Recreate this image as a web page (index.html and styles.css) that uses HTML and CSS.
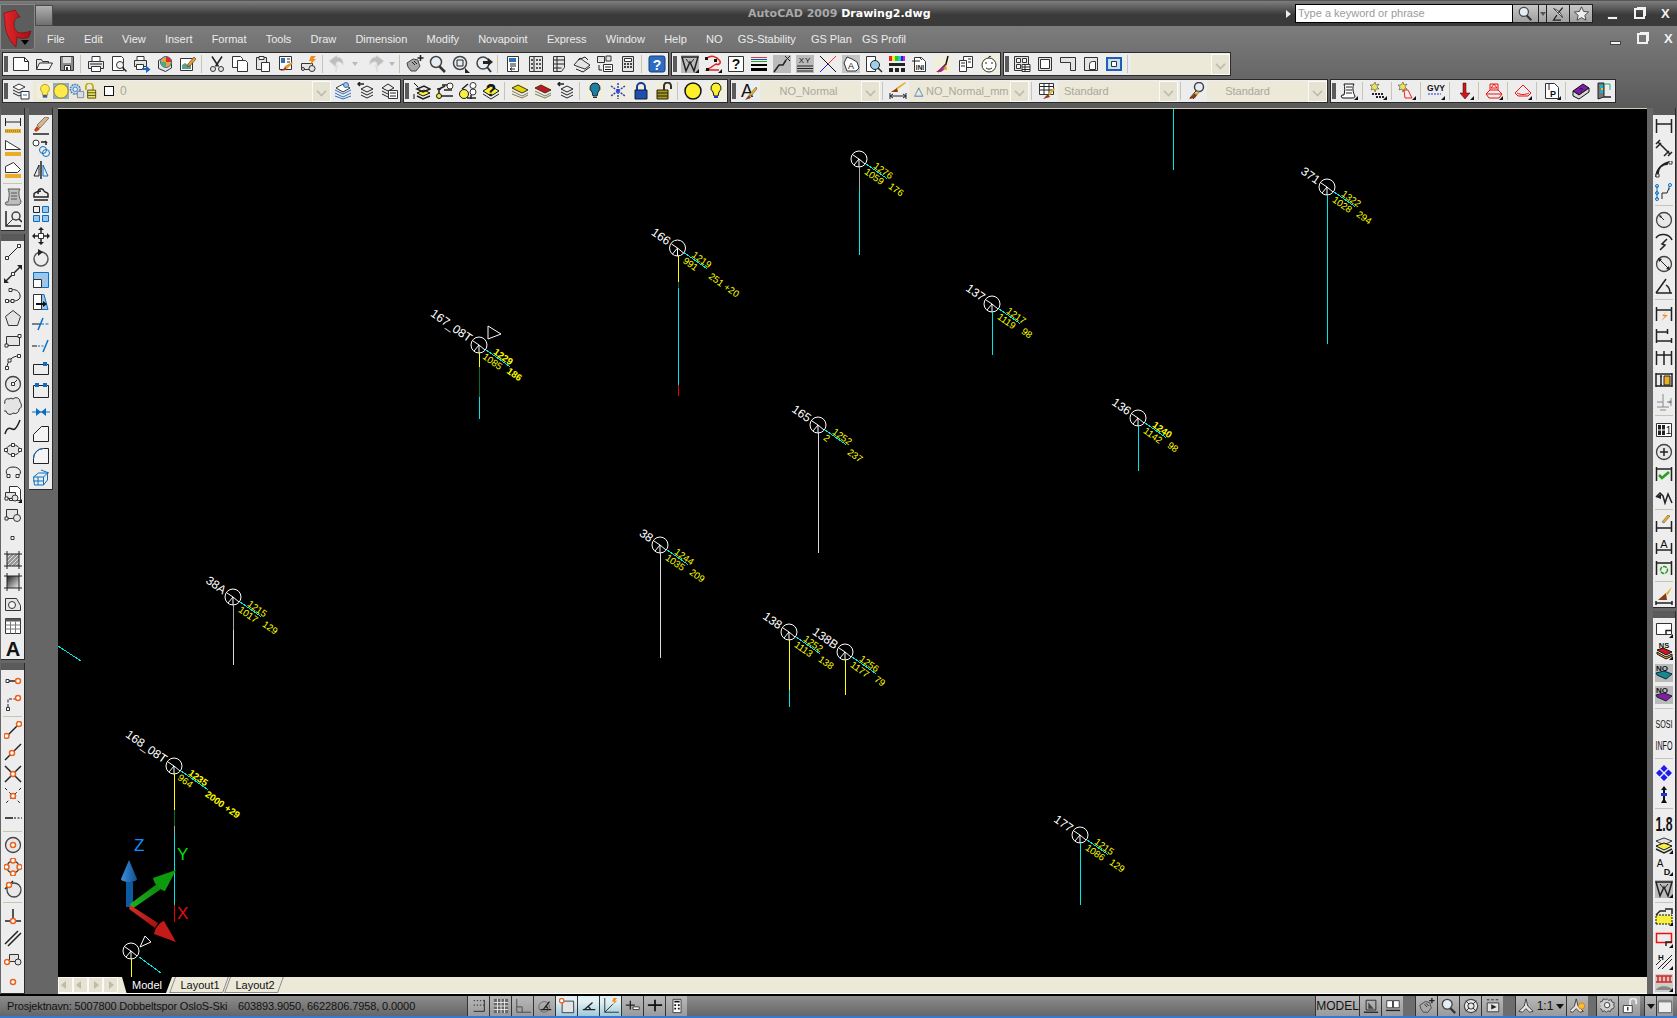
FILE: index.html
```html
<!DOCTYPE html>
<html lang="en">
<head>
<meta charset="utf-8">
<title>AutoCAD 2009 Drawing2.dwg</title>
<link rel="stylesheet" href="styles.css">
</head>
<body>
<svg class="sprite" aria-hidden="true">
<defs>
<!-- standard toolbar -->
<symbol id="new" viewBox="0 0 18 18"><path class="w" d="M1.5 2.5h11l4 4v9h-15z"/><path class="k" d="M12.5 2.5v4h4"/></symbol>
<symbol id="open" viewBox="0 0 18 18"><path class="g" d="M1.5 14.5v-10h5l1 2h6v2"/><path class="e" d="M1.5 14.5l3-6.500h13l-3.500 6.500z"/></symbol>
<symbol id="save" viewBox="0 0 18 18"><path fill="#8d8d8d" stroke="#333" d="M2.500 1.500h13v14h-13z"/><path fill="#ddd" d="M5 2h8v6H5z"/><path class="w" d="M6.500 10.500h6v5h-6z"/><path d="M8 12h2v3H8z" fill="#333"/></symbol>
<symbol id="plot" viewBox="0 0 18 18"><path class="w" d="M5 1.500h8v5H5z"/><path class="g" d="M1.500 6.500h15v7h-15z"/><path class="w" d="M4.500 11.500h9v5h-9z"/><path class="k" d="M3 9h12"/></symbol>
<symbol id="preview" viewBox="0 0 18 18"><path class="w" d="M2.500 1.500h9l2 2v12h-11z"/><circle class="e" cx="10" cy="10" r="3.500"/><path class="kk" d="M12.500 12.500l4 4"/></symbol>
<symbol id="publish" viewBox="0 0 18 18"><path class="w" d="M4 1.500h7v4H4z"/><path class="g" d="M1.500 5.500h12v6h-12z"/><path class="w" d="M3.500 9.500h7v5h-7z"/><path d="M9 13h4v-2.500l4.500 4-4.500 3.500V15H9z" fill="#1565c0"/></symbol>
<symbol id="d3" viewBox="0 0 18 18"><path class="g" d="M2.500 5.500l6-3.500 7 3v8l-6 3.500-7-3z"/><circle cx="10" cy="7" r="5.500" fill="#e9a23b" stroke="#2b73c4"/><path d="M10 1.500a5.500 5.500 0 0 1 5.500 5.500H10z" fill="#d43030"/><path d="M10 7h-5a5 5 0 0 0 5 5z" fill="#4db06a"/></symbol>
<symbol id="sheet" viewBox="0 0 18 18"><path class="w" d="M1.500 3.500h12v12h-12z"/><path fill="#5f9e8a" d="M3 10l3-2 3 2 3-1v5H3z"/><path d="M9 9l6-7 2 2-6 7-2.500.500z" fill="#ed9a2c" stroke="#333" stroke-width=".6"/></symbol>
<symbol id="cut" viewBox="0 0 18 18"><path class="kk" d="M4 1.500l6.500 10M14 1.500l-6.500 10"/><circle class="g" cx="5" cy="14" r="2.500"/><circle class="g" cx="13" cy="14" r="2.500"/></symbol>
<symbol id="copy" viewBox="0 0 18 18"><path class="w" d="M1.500 1.500h8l2 2v9h-10z"/><path class="w" d="M6.500 5.500h8l2 2v9h-10z"/></symbol>
<symbol id="paste" viewBox="0 0 18 18"><path class="g" d="M2.500 2.500h10v12h-10z"/><path class="e" d="M5 1.500h5v3H5z"/><path class="w" d="M7.500 7.500h8v9h-8z"/></symbol>
<symbol id="match" viewBox="0 0 18 18"><path class="w" d="M2.500 1.500h12v13h-12z"/><path fill="#2f6fb5" d="M4 3h4v5H4z"/><path class="k" d="M10 4h3M10 7h3"/><path d="M16 8l-6 6-3-1 1-2 7-4z" fill="#e89a2e"/><path d="M9 12l-6 4 6-1z" fill="#a3391c"/></symbol>
<symbol id="blockb" viewBox="0 0 18 18"><path class="g" d="M1.500 8.500h11v6h-11z"/><circle class="g" cx="12" cy="13.500" r="3"/><circle class="g" cx="3" cy="14" r="1.500"/><path d="M11 1h5l-3 3h3l-6 6 1.500-4H9z" fill="#ef8a17"/></symbol>
<symbol id="undo" viewBox="0 0 18 18"><path d="M7 17V9c0-3 5-3 7 1 1-5-2-8-6-8V0L0 6l8 7v-3c1-1-1 4-1 7z" fill="#bdbdbd" stroke="#ddd"/></symbol>
<symbol id="redo" viewBox="0 0 18 18"><path d="M11 17V9c0-3-5-3-7 1-1-5 2-8 6-8V0l8 6-8 7v-3c-1-1 1 4 1 7z" fill="#bdbdbd" stroke="#ddd"/></symbol>
<symbol id="pan" viewBox="0 0 18 18"><path d="M1 8l6-4 5 1 1 4 1 2-4 5H5L2 12z" fill="#a8a8a8" stroke="#444"/><path class="k" d="M6 7l3 3M8 6l3 3"/><path class="kk" d="M14.500 0v6M11.500 3h6"/></symbol>
<symbol id="zoom" viewBox="0 0 18 18"><circle class="gl" cx="7" cy="7" r="5.500"/><path d="M10.500 11.500l5.500 5.500" stroke="#333" stroke-width="2.500" fill="none"/></symbol>
<symbol id="zoomw" viewBox="0 0 18 18"><circle class="gl" cx="8" cy="8" r="6.500"/><path class="k" d="M5 5h6v6H5z"/><path d="M13 13l5 5h-5z" fill="#222"/></symbol>
<symbol id="zoomp" viewBox="0 0 18 18"><circle class="gl" cx="8" cy="8" r="6"/><path d="M12 12l4 5" stroke="#333" stroke-width="2" fill="none"/><path d="M18 7l-5-4v3H8v3h5v2z" fill="#222"/></symbol>
<symbol id="props" viewBox="0 0 18 18"><path class="w" d="M3.500 1.500h11v15h-11z"/><path fill="#2f6fb5" d="M5 3h7v4H5z"/><path class="k" d="M6 9h6M6 11h6"/><path d="M6 14h5M8 12.500L6 14l2 1.500" class="k"/></symbol>
<symbol id="dc" viewBox="0 0 18 18"><path class="g" d="M2.500 1.500h13v15h-13z"/><path class="k" d="M7 1.500v15"/><path fill="#555" d="M4 4h2v2H4zM4 8h2v2H4zM4 12h2v2H4zM9 4h2v2H9zM12 4h2v2h-2zM9 8h2v2H9zM12 8h2v2h-2zM9 12h2v2H9zM12 12h2v2h-2z"/></symbol>
<symbol id="tp" viewBox="0 0 18 18"><path class="g" d="M3.500 1.500h11v11l-3 4h-8z"/><path class="k" d="M7 1.500v15M3.500 5h11M3.500 9h11M3.500 13h8"/></symbol>
<symbol id="ssm" viewBox="0 0 18 18"><path class="g" d="M1 10l6-7 4 3 6 4-5 4-6-2z"/><path class="k" d="M3 14l7 3 7-5M5 5l7-3 3 3"/></symbol>
<symbol id="mk" viewBox="0 0 18 18"><path class="g" d="M1.500 1.500h7v6h-7zM10 1h5v5h-5z"/><path class="w" d="M7.500 9.500h9v7h-9z"/><path class="k" d="M9 12h6M9 14.500h6M3 10v5h3"/></symbol>
<symbol id="calc" viewBox="0 0 18 18"><path class="g" d="M3.500 1.500h11v15h-11z"/><path class="w" d="M5.500 3.500h7v3h-7z"/><path fill="#444" d="M5 8h2v2H5zM8 8h2v2H8zM11 8h2v2h-2zM5 11h2v2H5zM8 11h2v2H8zM11 11h2v2h-2z"/></symbol>
<symbol id="help" viewBox="0 0 18 18"><rect x="1" y="1" width="16" height="16" rx="2" fill="#2d6cc0" stroke="#173f7e"/><text x="9" y="14.500" class="it wt" font-size="14" text-anchor="middle">?</text></symbol>
<!-- custom toolbar -->
<symbol id="w1" viewBox="0 0 18 18"><path fill="#bbb" d="M0 0h18v18H0z"/><path class="kk" d="M1 2h16L13 16l-4-9-4 9z"/><path class="k" d="M5 4l4 5 4-5"/><path d="M14 18l4-4v4z" fill="#111"/></symbol>
<symbol id="cv" viewBox="0 0 18 18"><path d="M3 3c4-3 9-2 13 3 1 3-2 4-4 3l-9 6h12" fill="none" stroke="#d22" stroke-width="1.500"/><path fill="#111" d="M1 2h3v3H1zM10 4h3v3h-3zM2 13h3v3H2z"/><path d="M14 18l4-4v4z" fill="#111"/></symbol>
<symbol id="qm" viewBox="0 0 18 18"><path class="w" d="M1.500 1.500h15v15h-15z"/><text x="9" y="14" class="it" font-size="14" text-anchor="middle" font-weight="700">?</text></symbol>
<symbol id="bars" viewBox="0 0 18 18"><path stroke="#e33" d="M1 2.500h16"/><path stroke="#1b3fe0" d="M1 4.500h16"/><path stroke="#2a2" d="M1 6.500h16"/><path fill="#000" d="M1 9h16v2H1zM1 13h16v3H1z"/></symbol>
<symbol id="lnk" viewBox="0 0 18 18"><path fill="#bbb" d="M0 0h18v18H0z"/><path class="kk" d="M1 17l5-7h4l3-5"/><path class="k" d="M12 1l5 5M17 1l-5 5"/></symbol>
<symbol id="xy" viewBox="0 0 18 18"><path fill="#bbb" d="M0 0h18v18H0z"/><text x="9" y="8" class="it" font-size="8" text-anchor="middle" letter-spacing="1">XY</text><path class="k" d="M1 11h16M1 13.500h16M1 16h16"/></symbol>
<symbol id="xx" viewBox="0 0 18 18"><path stroke="#111" d="M1 1l16 16"/><path stroke="#e33" d="M17 1L9 9"/><path stroke="#22d" d="M9 9l-8 8"/></symbol>
<symbol id="map" viewBox="0 0 18 18"><path fill="#c5c5c5" d="M0 0h18v18H0z"/><path class="w" d="M2 8l3-6 5 2 5 3 2 6-3 3H5z"/><text x="9" y="14" class="it" font-size="9" fill="#1f3fd0" text-anchor="middle">A</text></symbol>
<symbol id="look" viewBox="0 0 18 18"><path class="w" d="M1.500 1.500h9v15h-9z"/><circle class="gb" cx="10" cy="10" r="4.500"/><path class="kk" d="M13 13l4 4"/></symbol>
<symbol id="rgb" viewBox="0 0 18 18"><path fill="#e22" d="M1 1h3v5H1z"/><path fill="#ee2" d="M4 1h3v5H4z"/><path fill="#2c2" d="M7 1h3v5H7z"/><path fill="#2cc" d="M10 1h3v5h-3z"/><path fill="#22d" d="M13 1h2v5h-2z"/><path fill="#c2c" d="M15 1h2v5h-2z"/><path fill="#222" d="M1 8h16v3H1zM1 13h4v4H1zM7 13h4v4H7zM13 13h4v4h-4z"/></symbol>
<symbol id="ini" viewBox="0 0 18 18"><path class="w" d="M3.500 2.500h7l4 4v10h-11z"/><path class="k" d="M1 6h8M8 2l3 3"/><text x="9" y="15" class="it" font-size="6.500" fill="#1a2fb0" text-anchor="middle" font-weight="700">INI</text></symbol>
<symbol id="brush" viewBox="0 0 18 18"><path fill="#f1eedc" d="M0 0h18v18H0z"/><path d="M14 1l-2 8-8 8" stroke="#111" stroke-width="1.500" fill="none"/><path d="M2 17l8-6 3-3-2 6-4 3z" fill="#a02b8a"/><path d="M9 14l3-4 1 5z" fill="#d8a11c"/></symbol>
<symbol id="pin" viewBox="0 0 18 18"><path class="w" d="M6.500 1.500h9v11h-9z"/><path class="w" d="M2.500 5.500h7v11h-7z"/><path class="k" d="M4 8h4M4 11h4M11 4h3M11 7h3"/></symbol>
<symbol id="face" viewBox="0 0 18 18"><path fill="#f1eedc" d="M0 0h18v18H0z"/><circle class="w" cx="9" cy="10" r="7"/><path class="k" d="M5 8h2M11 8h2M6 13c2 1.500 4 1.500 6 0"/><path class="k" d="M9 3c-1-2 2-2 2-1"/></symbol>
<!-- viewport toolbar -->
<symbol id="vp1" viewBox="0 0 18 18"><path class="g" d="M1.500 1.500h14v14h-14z"/><path class="e" d="M3.500 3.500h4v4h-4zM9.500 3.500h4v4h-4zM3.500 9.500h4v4h-4z"/><path class="w" d="M9 9.500h8v7H9z"/><path class="k" d="M9 12h8M9 14.500h8M12 9.500v7"/></symbol>
<symbol id="vp2" viewBox="0 0 18 18"><path class="g" d="M2.500 2.500h13v13h-13z"/><path class="w" d="M4.500 4.500h9v9h-9z"/></symbol>
<symbol id="vp3" viewBox="0 0 18 18"><path class="g" d="M1.500 2.500h15v13h-5v-8h-10z"/></symbol>
<symbol id="vp4" viewBox="0 0 18 18"><path class="g" d="M2.500 2.500h13v13h-13z"/><path class="w" d="M7.500 14.500v-5a3 3 0 0 1 3-3h3v8z"/></symbol>
<symbol id="vp5" viewBox="0 0 18 18"><path fill="#c5dff5" stroke="#1e5fb0" stroke-width="2" d="M2 3h14v12H2z"/><path class="w" d="M6.500 6.500h5v5h-5z"/></symbol>
<!-- layers row -->
<symbol id="layer" viewBox="0 0 18 18"><path class="w" d="M1 5l6-3 6 3-6 3z"/><path class="k" d="M1 8l6 3 4-2M1 11l6 3 2-1"/><path class="w" d="M9 9.500h8v7.500H9z"/><path stroke="#2f6fb5" d="M11 13h4"/></symbol>
<symbol id="bulb" viewBox="0 0 18 18"><path fill="#f1eedc" d="M0 0h18v18H0z"/><path d="M9 1.500a5 5 0 0 1 3 9v3H6v-3a5 5 0 0 1 3-9z" fill="#ffe94d" stroke="#aa9a22"/><path fill="#3c5ba8" d="M6.500 13.500h5v3h-5z"/></symbol>
<symbol id="sun" viewBox="0 0 18 18"><rect width="18" height="18" fill="#2f6fb5" opacity=".5"/><circle cx="9" cy="9" r="8" fill="#ffe94d" stroke="#8d8420"/></symbol>
<symbol id="gear" viewBox="0 0 18 18"><circle cx="7" cy="7" r="5.500" fill="#bdd0e6" stroke="#3f78b8" stroke-width="1.500" stroke-dasharray="2 1"/><circle cx="7" cy="7" r="2.500" fill="#e9eef5" stroke="#3f78b8"/><path fill="#d9dce3" stroke="#7b8a9a" d="M9.500 9.500h7v7h-7z"/></symbol>
<symbol id="unlock" viewBox="0 0 18 18"><path d="M1 8V4a4 4 0 0 1 8 0v4" stroke="#bcae1e" stroke-width="2" fill="none"/><path d="M3 8h9v9H3z" fill="#ece454" stroke="#4a441d"/><path stroke="#4a441d" d="M3 11h9M3 14h9"/></symbol>
<symbol id="lfreeze" viewBox="0 0 18 18"><path class="w" d="M2 6l7-4 7 4-7 4z"/><path stroke="#2f6fb5" fill="none" d="M1 8l8 4 8-4M1 11l8 4 8-4M1 14l8 3 8-3"/><circle cx="12" cy="3" r="2.500" fill="#9fc5ee" stroke="#2f6fb5"/></symbol>
<symbol id="lprev" viewBox="0 0 18 18"><path class="k" d="M4 7l6-3 6 3-6 3zM4 10l6 3 6-3M4 13l6 3 6-3"/><path class="kk" d="M7 2H1m2-2L1 2l2 2"/></symbol>
<symbol id="lstate" viewBox="0 0 18 18"><path class="k" d="M2 6l6-4 6 4-6 3zM2 9l6 3 4-2M2 12l6 3"/><path class="w" d="M8.500 8.500h9v8h-9z"/><path class="k" d="M10 11h6M10 14h6"/></symbol>
<symbol id="lmake" viewBox="0 0 18 18"><path d="M4 11l7-3 6 3-7 3z" fill="#f7ef3f" stroke="#111"/><path class="kk" d="M4 7l7-3 6 3-7 3zM4 14l6 3 7-3"/><path d="M1 1l4 4M1 17V12" stroke="#111" fill="none"/></symbol>
<symbol id="lmatch" viewBox="0 0 18 18"><path class="kk" d="M1 7h4m1-4h10M8 8h8"/><circle cx="3" cy="14" r="2.500" fill="#f7ef3f" stroke="#111"/><circle cx="14" cy="4" r="3" class="w"/><path class="kk" d="M5 14h12M3 11V7l6-3"/></symbol>
<symbol id="lchg" viewBox="0 0 18 18"><circle cx="14" cy="3.500" r="3" class="w"/><circle cx="14" cy="10" r="3" class="w"/><circle cx="5" cy="12" r="4.500" fill="#f7ef3f" stroke="#111"/><path class="kk" d="M9 2L3 7M8 16h9M12 13v4"/></symbol>
<symbol id="lqm" viewBox="0 0 18 18"><path d="M1 9l8-5 8 5-8 5z" fill="#f7ef3f" stroke="#111"/><path class="k" d="M1 12l8 5 8-5"/><text x="9" y="14" class="it" font-size="17" fill="#1c35e0" text-anchor="middle" font-weight="700">?</text></symbol>
<symbol id="lyel" viewBox="0 0 18 18"><path fill="#f1eedc" d="M0 0h18v18H0z"/><path d="M1 6l6-3 10 5-6 3z" fill="#e6d600" stroke="#333"/><path d="M1 9l10 5 6-3M1 12l10 4 6-3" fill="none" stroke="#777"/></symbol>
<symbol id="lred" viewBox="0 0 18 18"><path fill="#f1eedc" d="M0 0h18v18H0z"/><path d="M1 6l6-3 10 5-6 3z" fill="#c8141a" stroke="#333"/><path d="M1 9l10 5 6-3M1 12l10 4 6-3" fill="none" stroke="#777"/></symbol>
<symbol id="blub" viewBox="0 0 18 18"><path fill="#f1eedc" d="M0 0h18v18H0z"/><path d="M9 1a5 5 0 0 1 3 9l-1 4H7l-1-4A5 5 0 0 1 9 1z" fill="#1f7fa0" stroke="#123"/><path stroke="#333" d="M7 15.500h4"/></symbol>
<symbol id="snow" viewBox="0 0 18 18"><path fill="#f1eedc" d="M0 0h18v18H0z"/><path stroke="#2a3fc8" stroke-width="1.500" stroke-dasharray="2 1" d="M9 1v16M2 4l14 10M16 4L2 14"/></symbol>
<symbol id="lock" viewBox="0 0 18 18"><path fill="#f1eedc" d="M0 0h18v18H0z"/><path d="M5 9V5a4 4 0 0 1 8 0v4" fill="none" stroke="#123c9c" stroke-width="2"/><path d="M3 8h12v9H3z" fill="#1d4fb0" stroke="#123"/></symbol>
<symbol id="lockx" viewBox="0 0 18 18"><path fill="#f1eedc" d="M0 0h18v18H0z"/><path d="M9 9V4a3 3 0 0 1 7 0v3" fill="none" stroke="#333" stroke-width="2"/><path d="M2 8h11v9H2z" fill="#a89a14" stroke="#222"/><path stroke="#222" d="M2 11h11M2 14h11"/></symbol>
<symbol id="circy" viewBox="0 0 18 18"><circle cx="9" cy="9" r="8" fill="#fcf02c" stroke="#111" stroke-width="1.500"/></symbol>
<symbol id="bulb2" viewBox="0 0 18 18"><path fill="#f1eedc" d="M0 0h18v18H0z"/><path d="M9 1a5 5 0 0 1 3 9l-1 4H7l-1-4A5 5 0 0 1 9 1z" fill="#fcf02c" stroke="#111"/><path stroke="#1c35e0" stroke-width="2" d="M7 15h4"/></symbol>
<!-- styles row -->
<symbol id="atext" viewBox="0 0 18 18"><text x="7" y="15" class="it" font-size="18" text-anchor="middle">A</text><path d="M17 7l-6 7-2-1 7-8z" fill="#e8b21e" stroke="#553" stroke-width=".5"/><path d="M9 13l-4 5 6-2z" fill="#8a3b15"/></symbol>
<symbol id="dimb" viewBox="0 0 18 18"><path class="k" d="M1 11v6M17 11v6M1 14h16M1 14l3-2M1 14l3 2M17 14l-3-2M17 14l-3 2"/><path d="M17 1L9 7 7 6l9-6z" fill="#e8b21e"/><path d="M8 6L2 10l7 0z" fill="#8a3b15"/></symbol>
<symbol id="tblb" viewBox="0 0 18 18"><path class="w" d="M1.500 1.500h14v11h-14z"/><path class="k" d="M1.500 4.500h14M1.500 8h14M6 1.500v11M11 1.500v11"/><path d="M17 7l-5 6-2-1 6-6z" fill="#e8b21e"/><path d="M10 12l-5 5 7-2z" fill="#8a3b15"/></symbol>
<symbol id="mlb" viewBox="0 0 18 18"><circle class="gl" cx="12" cy="5" r="4.500"/><path class="k" d="M9 9l-6 7M12 10l-6 7"/><path d="M8 11l-6 6 6-1 2-3z" fill="#8a3b15"/><path d="M11 9L8 12l2 1 2-3z" fill="#e8b21e"/></symbol>
<symbol id="scroll" viewBox="0 0 18 18"><path d="M4 2h10c-2 3-1 9 1 12 0 2-2 2-3 2H3c-2 0-2-2-1-3h2c1-4 1-8 0-11z" fill="#fff" stroke="#111"/><path class="k" d="M6 5h6M6 8h6M6 11h6"/><path d="M14 18l4-4v4z" fill="#111"/></symbol>
<symbol id="sparkg" viewBox="0 0 18 18"><path fill="#ece454" stroke="#333" stroke-width=".5" d="M6 0l1 3 3-1-2 3 2 2-3 0-1 3-1-3-3 1 1-3-2-2 3 0z"/><path stroke="#222" stroke-dasharray="2 1" stroke-width="2" d="M3 12h12M7 15h8"/><path d="M14 18l4-4v4z" fill="#111"/></symbol>
<symbol id="sparkr" viewBox="0 0 18 18"><path fill="#ece454" stroke="#333" stroke-width=".5" d="M5 0l1 3 3-1-2 3 2 2-3 0-1 3-1-3-3 1 1-3-2-2 3 0z"/><path fill="none" stroke="#e22" d="M6 8h4l4 8H7z"/><path d="M14 18l4-4v4z" fill="#111"/></symbol>
<symbol id="gvy" viewBox="0 0 18 18"><text x="9" y="9" class="it" font-size="8.500" text-anchor="middle" font-weight="700">GVY</text><path d="M1 12h13" stroke="#1c35e0" stroke-dasharray="2 1"/><path d="M14 18l4-4v4z" fill="#111"/></symbol>
<symbol id="arrd" viewBox="0 0 18 18"><path d="M7 1h3v10h4l-5 6-5-6h3z" fill="#d8141a" stroke="#111" stroke-width=".5"/><path d="M14 18l4-4v4z" fill="#111"/></symbol>
<symbol id="hood" viewBox="0 0 18 18"><path d="M5 8V2h8v6l4 4-3 4H4l-3-4z" fill="none" stroke="#e11"/><path stroke="#e11" d="M2 12h14M5 8h8M9 2l3 4H6z" fill="none"/><path d="M14 18l4-4v4z" fill="#111"/></symbol>
<symbol id="dome" viewBox="0 0 18 18"><path d="M9 3l8 8-3 3H4l-3-3z" fill="none" stroke="#e11"/><path d="M3 11c4 2 8 2 12 0" stroke="#e11" fill="none"/><path d="M14 18l4-4v4z" fill="#111"/></symbol>
<symbol id="page" viewBox="0 0 18 18"><path class="w" d="M2.500 1.500h9l4 4v11h-13z"/><path class="k" d="M6 2v6"/><text x="10" y="15" class="it" font-size="9" font-weight="700" text-anchor="middle">P</text><path d="M14 18l4-4v4z" fill="#111"/></symbol>
<symbol id="book" viewBox="0 0 18 18"><path d="M1 9l10-7 6 4-10 7z" fill="#7b1da5" stroke="#111"/><path d="M1 9v5l6 3 10-7V6L7 13z" fill="#d8d8d8" stroke="#111"/><text x="9" y="10" class="it" font-size="6" fill="#ffe94d" text-anchor="middle">?</text></symbol>
<symbol id="door" viewBox="0 0 18 18"><path d="M3 1h6v14l-6 2z" fill="#777" stroke="#222"/><path d="M9 2h6v6" fill="none" stroke="#2a7"/><path fill="#12b4d8" d="M5 3h3v3H5zM5 8h3v3H5z"/><path fill="#f0c020" d="M6 6h2v2H6z"/><path class="kk" d="M9 15h7"/></symbol>
<!-- modify -->
<symbol id="erase" viewBox="0 0 18 18"><path d="M17 1l-9 10-3-3 8-8z" fill="#d8b784" stroke="#877"/><path d="M5 9l3 3-4 3-2-2z" fill="#c83d1c"/><path class="kk" d="M1 17h16"/></symbol>
<symbol id="mcopy" viewBox="0 0 18 18"><circle class="w" cx="4" cy="4" r="3"/><circle class="bl" cx="11" cy="11" r="3.500"/><circle class="bl" cx="14" cy="14" r="3.500"/><path class="kk" d="M9 3h5l-1-1M14 3v3"/></symbol>
<symbol id="mirror" viewBox="0 0 18 18"><path class="kk" d="M9 0v18"/><path class="k" d="M7 4v11H2z"/><path class="bl" d="M11 4v11h5z"/></symbol>
<symbol id="offset" viewBox="0 0 18 18"><path class="kk" d="M2 14v-3c0-2 3-1 4-3 1-3 5-3 6 0 1 2 4 1 4 3v3z"/><path class="kk" d="M2 17h14M6 11c0-2 0-3 3-3"/></symbol>
<symbol id="array" viewBox="0 0 18 18"><path class="k" d="M1.500 1.500h6v6h-6z"/><path class="bf" d="M10.500 1.500h6v6h-6zM1.500 10.500h6v6h-6zM10.500 10.500h6v6h-6z"/></symbol>
<symbol id="move" viewBox="0 0 18 18"><path class="kk" d="M9 1v16M1 9h16"/><path fill="#222" d="M9 0l3 3H6zM9 18l3-3H6zM0 9l3-3v6zM18 9l-3-3v6z"/><path class="w" d="M6.500 6.500h5v5h-5z"/></symbol>
<symbol id="rotate" viewBox="0 0 18 18"><circle cx="9" cy="10" r="7" fill="none" stroke="#555" stroke-width="1.500"/><path d="M6 0l5 3-5 4z" fill="#222"/></symbol>
<symbol id="scale" viewBox="0 0 18 18"><path class="bf" d="M1.500 1.500h15v15h-15z"/><path class="w" d="M1.500 8.500h8v8h-8z"/></symbol>
<symbol id="stretch" viewBox="0 0 18 18"><path class="bf" d="M8 1.500h4l4 15H8z"/><path class="w" d="M1.500 1.500h8v15h-8z"/><path d="M4 10h7V8l4 3-4 3v-2H4z" fill="#111"/></symbol>
<symbol id="trim" viewBox="0 0 18 18"><path stroke="#0a6fc2" stroke-dasharray="3 1.500" d="M9 9h9"/><path stroke="#111" d="M0 9h8"/><path stroke="#0a6fc2" stroke-width="1.500" d="M6 15l5-12"/></symbol>
<symbol id="extend" viewBox="0 0 18 18"><path stroke="#111" d="M0 9h5"/><path stroke="#0a6fc2" stroke-dasharray="2 1.500" d="M6 9h6"/><path stroke="#0a6fc2" stroke-width="1.500" d="M11 15l5-12"/></symbol>
<symbol id="brk1" viewBox="0 0 18 18"><path class="k" d="M1.500 15.500v-10h15v10z"/><path fill="#0a6fc2" d="M11 3h4v4h-4z"/></symbol>
<symbol id="brk2" viewBox="0 0 18 18"><path class="k" d="M1.500 16.500v-12h15v12z"/><path fill="#0a6fc2" d="M3 2h4v4H3zM11 2h4v4h-4z"/></symbol>
<symbol id="join" viewBox="0 0 18 18"><path stroke="#0a6fc2" d="M0 9h18"/><path fill="#0a6fc2" d="M4 5l5 4-5 4zM14 5l-5 4 5 4z"/></symbol>
<symbol id="chamfer" viewBox="0 0 18 18"><path class="g0" d="M1.500 16.500v-7l8-8h7v15z"/></symbol>
<symbol id="fillet" viewBox="0 0 18 18"><path class="g0" d="M1.500 16.500v-5a10 10 0 0 1 10-10h5v15z"/><path stroke="#0a6fc2" fill="none" d="M1.500 11.500a10 10 0 0 1 10-10"/></symbol>
<symbol id="exp" viewBox="0 0 18 18"><path class="bl" d="M1.500 8l5-4h9v7l-4 5h-9z"/><path class="bl" d="M1.500 8h10v8M11.500 8l4-4M6 8v8M1 12h10M9 1l8 3"/></symbol>
<!-- dim -->
<symbol id="dlin" viewBox="0 0 18 18"><path fill="#e8ae2a" d="M1 12h16v4H1z"/><path stroke="#7a5a10" stroke-dasharray="1 1" d="M1 14h16"/><path class="k" d="M1.500 1v8M16.500 1v8M1.500 5h15"/></symbol>
<symbol id="dtri" viewBox="0 0 18 18"><path fill="#e8ae2a" d="M1 13h16v4H1z"/><path class="w" d="M1.500 1.500l15 9h-15z"/></symbol>
<symbol id="dtri2" viewBox="0 0 18 18"><path fill="#e8ae2a" d="M1 13h16v4H1z"/><path class="w" d="M1.500 5.500l8-4 7 7-3 3h-12z"/></symbol>
<symbol id="scrollg" viewBox="0 0 18 18"><path d="M4 1h12c-2 3-1 9 1 12 0 3-2 4-3 4H3c-2 0-2-2-1-3h2c1-4 2-9 0-13z" fill="#bdbdbd" stroke="#555"/><path stroke="#555" d="M7 5h6M7 8h6M7 11h6"/></symbol>
<symbol id="axz" viewBox="0 0 18 18"><path class="kk" d="M2 1v15h15"/><path d="M2 16l7-7" stroke="#333"/><circle class="gl" cx="12" cy="6" r="4"/><path class="kk" d="M15 9l3 3"/></symbol>
<!-- draw -->
<symbol id="line" viewBox="0 0 18 18"><path class="k" d="M3 15L15 3"/><path class="w" d="M1.500 13.500h3v3h-3zM13.500 1.500h3v3h-3z"/></symbol>
<symbol id="xline" viewBox="0 0 18 18"><path class="kk" d="M1 17L17 1"/><path fill="#222" d="M0 18V13l5 5zM18 0v5l-5-5z"/><path class="w" d="M7.500 7.500h3v3h-3z"/></symbol>
<symbol id="pline" viewBox="0 0 18 18"><path class="k" d="M3 14h6c3 0 8-1 7-6s-6-6-9-5"/><path class="w" d="M1.500 12.500h3v3h-3zM7 12.500h3v3H7zM5 1.500h3v3H5z"/></symbol>
<symbol id="poly" viewBox="0 0 18 18"><path class="g" d="M9 1.500l7.500 6-3 9h-9l-3-9z"/></symbol>
<symbol id="rect" viewBox="0 0 18 18"><path class="g" d="M2.500 5.500h13v9h-13z"/><path class="w" d="M1 13h3v3H1zM14 3.500h3v3h-3z"/></symbol>
<symbol id="arc" viewBox="0 0 18 18"><path class="k" d="M3 15c0-7 5-12 12-12"/><path class="w" d="M1.500 13.500h3v3h-3zM13.500 1.500h3v3h-3zM4 6h3v3H4z"/></symbol>
<symbol id="circ" viewBox="0 0 18 18"><circle class="gk" cx="9" cy="9" r="7.500"/><path class="k" d="M9 9l4-4"/><path class="w" d="M7.500 7.500h3v3h-3z"/></symbol>
<symbol id="cloud" viewBox="0 0 18 18"><path class="g" d="M5 2a3 3 0 0 1 4 0 4 4 0 0 1 7 3c2 2 2 6-1 7a4 4 0 0 1-6 4 4 4 0 0 1-7-2 4 4 0 0 1-1-8 3 3 0 0 1 4-4z"/></symbol>
<symbol id="spline" viewBox="0 0 18 18"><path class="kk" d="M1 15c2-7 5-6 7-5s4 1 8-9" stroke="#555"/></symbol>
<symbol id="ell" viewBox="0 0 18 18"><ellipse class="g" cx="9" cy="9" rx="7" ry="5"/><path class="w" d="M7.500 2.500h3v3h-3zM7.500 12.500h3v3h-3zM.5 7.500h3v3h-3zM14.500 7.500h3v3h-3z"/></symbol>
<symbol id="earc" viewBox="0 0 18 18"><path class="k" d="M5 13C0 10 2 4 9 4s10 6 5 9"/><path class="w" d="M3 11.500h3v3H3zM12 11.500h3v3h-3z"/></symbol>
<symbol id="ins" viewBox="0 0 18 18"><path class="w" d="M5.500 1.500h8l3 3v11h-11z"/><path class="g" d="M1.500 7.500h10v6h-10z"/><circle class="g" cx="11" cy="13" r="3"/><path class="w" d="M1 12h3v3H1z"/><path d="M14 18l4-4v4z" fill="#111"/></symbol>
<symbol id="blk" viewBox="0 0 18 18"><path class="g" d="M2.500 2.500h11v9h-11z"/><circle class="g" cx="13" cy="11" r="3.500"/><path class="w" d="M1 10h3v3H1z"/></symbol>
<symbol id="pt" viewBox="0 0 18 18"><path class="w" d="M7 7.500h3v3H7z"/></symbol>
<symbol id="hatch" viewBox="0 0 18 18"><path fill="#999" d="M3 3h12v12H3z"/><path stroke="#ddd" d="M3 7l4-4M3 11l8-8M3 15L15 3M7 15l8-8M11 15l4-4"/><path class="k" d="M0 3h18M0 15h18M3 0v18M15 0v18"/></symbol>
<symbol id="grad" viewBox="0 0 18 18"><defs><linearGradient id="gr1" x1="0" y1="0" x2="1" y2="1"><stop offset="0" stop-color="#222"/><stop offset="1" stop-color="#eee"/></linearGradient></defs><path fill="url(#gr1)" d="M3 3h12v12H3z"/><path class="k" d="M0 3h18M0 15h18M3 0v18M15 0v18"/></symbol>
<symbol id="region" viewBox="0 0 18 18"><path class="g" d="M1.500 3.500h11l4 7v5h-15z"/><circle class="e" cx="8" cy="10" r="3.500"/></symbol>
<symbol id="table" viewBox="0 0 18 18"><path class="w" d="M1.500 1.500h15v15h-15z"/><path fill="#5a5a5a" d="M1.500 1.500h15v3h-15z"/><path stroke="#777" fill="none" d="M1.500 8h15M1.500 12h15M6.500 4.500v12M11.500 4.500v12"/></symbol>
<symbol id="bigA" viewBox="0 0 18 18"><text x="9" y="17" class="it" font-size="20" font-weight="700" text-anchor="middle">A</text></symbol>
<!-- osnap -->
<symbol id="s1" viewBox="0 0 18 18"><path class="kk" d="M5 9h8"/><path class="w" d="M2 7.500h3v3H2z"/><circle class="o" cx="14" cy="9" r="2.500"/></symbol>
<symbol id="s2" viewBox="0 0 18 18"><path d="M4 13V5h8" stroke="#222" stroke-dasharray="3 1.500" fill="none"/><path class="w" d="M2.500 13.500h3v3h-3z"/><circle class="o" cx="14" cy="4" r="2.500"/></symbol>
<symbol id="s3" viewBox="0 0 18 18"><path class="kk" d="M3 15L15 3"/><circle class="o" cx="2.500" cy="15" r="2.500"/><circle class="o" cx="15" cy="3" r="2.500"/></symbol>
<symbol id="s4" viewBox="0 0 18 18"><path class="kk" d="M1 17L17 1"/><circle class="o" cx="8" cy="10" r="2.500"/></symbol>
<symbol id="s5" viewBox="0 0 18 18"><path class="kk" d="M1 1l16 16M17 1L1 17"/><circle class="o" cx="9" cy="9" r="2.500"/></symbol>
<symbol id="s6" viewBox="0 0 18 18"><path d="M1 1l16 16M17 1L1 17" stroke="#222" stroke-dasharray="3 3" fill="none"/><circle class="o" cx="9" cy="9" r="2.500"/></symbol>
<symbol id="s7" viewBox="0 0 18 18"><path stroke="#111" stroke-width="1.500" d="M1 9h8"/><path stroke="#111" stroke-dasharray="2 1.500" d="M10 9h8"/></symbol>
<symbol id="s8" viewBox="0 0 18 18"><circle class="gk" cx="9" cy="9" r="7.500"/><circle class="o" cx="9" cy="9" r="2.500"/></symbol>
<symbol id="s9" viewBox="0 0 18 18"><circle class="gk" cx="9" cy="9" r="6"/><circle class="o" cx="9" cy="2.500" r="2.500"/><circle class="o" cx="9" cy="15.500" r="2.500"/><circle class="o" cx="2.500" cy="9" r="2.500"/><circle class="o" cx="15.500" cy="9" r="2.500"/></symbol>
<symbol id="s10" viewBox="0 0 18 18"><circle class="gk" cx="10" cy="10" r="7"/><path class="kk" d="M1 9l8-8"/><circle class="o" cx="5" cy="5" r="2.500"/></symbol>
<symbol id="s11" viewBox="0 0 18 18"><path class="kk" d="M9 2v12M1 14h16"/><circle class="o" cx="9" cy="14" r="2.500"/></symbol>
<symbol id="s12" viewBox="0 0 18 18"><path class="kk" d="M1 15L14 2M4 17L17 4"/></symbol>
<symbol id="s13" viewBox="0 0 18 18"><path class="g" d="M5.500 3.500h9v7h-9z"/><circle class="g" cx="14" cy="11" r="3"/><circle class="o" cx="3" cy="11" r="2.500"/></symbol>
<symbol id="s14" viewBox="0 0 18 18"><circle class="o" cx="9" cy="9" r="2.500"/></symbol>
<!-- right dimension -->
<symbol id="r1" viewBox="0 0 18 18"><path class="kk" d="M1.500 2v14M16.500 2v14M1.500 7h15"/></symbol>
<symbol id="r2" viewBox="0 0 18 18"><path class="kk" d="M5 1L1 5M17 13l-4 4M3 3l12 12M1 9l5-5M9 17l5-5"/></symbol>
<symbol id="r3" viewBox="0 0 18 18"><path class="kk" d="M3 13C3 7 7 3 13 3M1 16c0-8 7-15 15-15" stroke="#444"/><path class="w" d="M1 13h3v3H1zM14 0h3v3h-3z"/></symbol>
<symbol id="r4" viewBox="0 0 18 18"><path class="k" d="M7 16v-6h5l2-5"/><path stroke="#0a6fc2" fill="none" d="M2 3v13M14 3v4"/><circle class="bl" cx="2" cy="3" r="1.500"/><circle class="bl" cx="2" cy="10" r="1.500"/><circle class="bl" cx="2" cy="16" r="1.500"/><circle class="bl" cx="15" cy="2" r="1.500"/></symbol>
<symbol id="r5" viewBox="0 0 18 18"><circle class="gk" cx="9" cy="9" r="7.500"/><path class="k" d="M9 9L5 5"/><path fill="#222" d="M4 4l3 1-2 2z"/></symbol>
<symbol id="r6" viewBox="0 0 18 18"><path class="kk" d="M1 5C4 0 14 0 17 7M12 6l-5 5 3 1-5 5"/></symbol>
<symbol id="r7" viewBox="0 0 18 18"><circle class="gk" cx="9" cy="9" r="7.500"/><path class="k" d="M4 4l10 10"/><path fill="#222" d="M3 3l4 1-3 3zM15 15l-4-1 3-3z"/></symbol>
<symbol id="r8" viewBox="0 0 18 18"><path class="kk" d="M1 16h16M1 16L11 2M11 8c3 2 4 5 4 8"/></symbol>
<symbol id="r9" viewBox="0 0 18 18"><path class="kk" d="M1.500 2v14M16.500 2v14M1.500 5h15"/><path d="M12 6L7 11h3l-4 5 7-6H9l3-4z" fill="#ef8a17"/></symbol>
<symbol id="r10" viewBox="0 0 18 18"><path class="kk" d="M1.500 2v14M1.500 5h11M1.500 14h15M12.500 2v5M16.500 11v5"/></symbol>
<symbol id="r11" viewBox="0 0 18 18"><path class="kk" d="M1.500 2v14M9 2v14M16.500 2v14M1.500 6h15"/></symbol>
<symbol id="r12" viewBox="0 0 18 18"><path class="kk" d="M1 2v14M17 2v14M1 3h16M1 15h16"/><path d="M9 5h6v9H9z" fill="#e8ae2a" stroke="#222"/><path class="kk" d="M6 5v9M5 5h2M5 14h2"/></symbol>
<symbol id="r13" viewBox="0 0 18 18"><path stroke="#888" fill="none" d="M8 1v13M2 14h12M5 17h6M2 9h6M12 9h5M16 5v8"/><path fill="#888" d="M13 9l3-2v4z"/></symbol>
<symbol id="r14" viewBox="0 0 18 18"><path class="w" d="M1.500 2.500h15v13h-15z"/><path d="M3 4h7v10H3z" fill="#222"/><path d="M6.500 4v10M3 9h7" stroke="#fff"/><text x="13.500" y="13" class="it" font-size="10" text-anchor="middle">1</text></symbol>
<symbol id="r15" viewBox="0 0 18 18"><circle class="gk" cx="9" cy="9" r="7.500"/><path class="kk" d="M5 9h8M9 5v8"/></symbol>
<symbol id="r16" viewBox="0 0 18 18"><path class="kk" d="M1.500 2v14M16.500 2v14M1.500 4h15"/><path d="M4 10l3 3 7-6" stroke="#2a9d1e" stroke-width="2.500" fill="none"/></symbol>
<symbol id="r17" viewBox="0 0 18 18"><path class="kk" d="M1 10l4-4 3 3 2 7 3-9 4 9"/><path fill="#222" d="M1 10l5-3 0 5z"/></symbol>
<symbol id="r18" viewBox="0 0 18 18"><path class="kk" d="M1.500 6v11M16.500 6v11M1.500 13h15"/><path d="M15 1l-6 7-2-1 6-7z" fill="#e8b21e" stroke="#543" stroke-width=".5"/></symbol>
<symbol id="r19" viewBox="0 0 18 18"><path class="kk" d="M1.500 6v11M16.500 6v11M1.500 13h15"/><text x="9" y="11" class="it" font-size="11" text-anchor="middle">A</text></symbol>
<symbol id="r20" viewBox="0 0 18 18"><path class="kk" d="M1.500 2v14M16.500 2v14M1.500 4h15"/><circle cx="9" cy="11" r="3.500" fill="none" stroke="#2a9d1e" stroke-width="1.500" stroke-dasharray="4 1"/></symbol>
<symbol id="r21" viewBox="0 0 18 18"><path d="M17 0l-6 6 2 2z" fill="#e8b21e"/><path d="M11 6l-8 7h9z" fill="#8a3b15"/><path class="kk" d="M1 14v4M17 14v4M1 16h16"/></symbol>
<symbol id="c1" viewBox="0 0 18 18"><path class="w" d="M1.500 3.500h15v11h-15z"/><path class="kk" d="M11 14.500v-4h5.500"/><path d="M14 18l4-4v4z" fill="#111"/></symbol>
<symbol id="c2" viewBox="0 0 18 18"><text x="9" y="6" class="it" font-size="7.500" font-weight="700" text-anchor="middle">NS</text><path d="M2 8l6-2 9 4-6 3z" fill="#d8141a" stroke="#111"/><path d="M2 10l9 5 6-3v2l-6 3-9-5z" fill="#e8ae2a" stroke="#111"/><path d="M14 18l4-4v4z" fill="#111"/></symbol>
<symbol id="c3" viewBox="0 0 18 18"><path fill="#bbb" d="M0 0h18v18H0z"/><text x="7" y="7" class="it" font-size="8" font-weight="700" text-anchor="middle">NO</text><path d="M1 9l8-2 8 3-6 5-9-4z" fill="#168a8a" stroke="#124"/></symbol>
<symbol id="c4" viewBox="0 0 18 18"><path fill="#bbb" d="M0 0h18v18H0z"/><text x="7" y="7" class="it" font-size="8" font-weight="700" text-anchor="middle">NO</text><path d="M1 9l8-2 8 3-6 5-9-4z" fill="#861d9a" stroke="#124"/></symbol>
<symbol id="c5" viewBox="0 0 18 18"><text x="9" y="14" class="it" font-size="11" text-anchor="middle" textLength="17" lengthAdjust="spacingAndGlyphs">SOSI</text></symbol>
<symbol id="c6" viewBox="0 0 18 18"><text x="9" y="14" class="it" font-size="12" text-anchor="middle" textLength="17" lengthAdjust="spacingAndGlyphs">INFO</text></symbol>
<symbol id="c7" viewBox="0 0 18 18"><path fill="#1c1cf0" d="M9 1l3.500 3.500L9 8 5.500 4.500zM4.500 5.500L8 9l-3.500 3.500L1 9zM13.500 5.500L17 9l-3.500 3.500L10 9zM9 10l3.500 3.500L9 17l-3.500-3.500z"/></symbol>
<symbol id="c8" viewBox="0 0 18 18"><path stroke="#111" stroke-width="2" d="M9 1v16"/><path fill="#111" d="M9 0l3 4H6zM6 17l3-5 3 5z"/><path fill="#1c35e0" d="M6 7h6v3H6z"/></symbol>
<symbol id="c9" viewBox="0 0 18 18"><text x="9" y="17" class="it" font-size="20" font-weight="700" text-anchor="middle" textLength="17" lengthAdjust="spacingAndGlyphs">1.8</text></symbol>
<symbol id="c10" viewBox="0 0 18 18"><path class="g" d="M1 5l8-3 8 3-8 4z"/><path d="M1 10l8 4 8-4-8-3z" fill="#f7ef3f" stroke="#111"/><path class="kk" d="M1 13l8 4 8-4"/><path d="M14 18l4-4v4z" fill="#111"/></symbol>
<symbol id="c11" viewBox="0 0 18 18"><text x="5" y="9" class="it" font-size="10" text-anchor="middle">A</text><text x="12" y="17" class="it" font-size="9" fill="#d22" font-weight="700" text-anchor="middle">D</text><path d="M14 18l4-4v4z" fill="#111"/></symbol>
<symbol id="c13" viewBox="0 0 18 18"><path d="M1 16V7h16v9z" fill="#f7ef3f" stroke="#111" stroke-dasharray="2 1"/><path class="kk" d="M1 7l4-4h6M10 1h7v5"/><path d="M14 18l4-4v4z" fill="#111"/></symbol>
<symbol id="c14" viewBox="0 0 18 18"><path d="M1.500 3.500h15v9h-15z" fill="none" stroke="#e11" stroke-width="1.500"/><path class="kk" d="M11 16v-4h6"/><path d="M14 18l4-4v4z" fill="#111"/></symbol>
<symbol id="c15" viewBox="0 0 18 18"><text x="3" y="8" class="it" font-size="8" font-weight="700" fill="#d22">H</text><path class="k" d="M3 17L17 3M7 17L17 7M1 13l5-5"/><path d="M14 18l4-4v4z" fill="#111"/></symbol>
<symbol id="c16" viewBox="0 0 18 18"><path fill="#ccc" d="M0 0h18v18H0z"/><path d="M1 16c2-5 14-5 16 0z" fill="#888"/><path fill="none" stroke="#d22" stroke-width="1.500" d="M1 2h16M3 2v6M7 2v6M11 2v6M15 2v6M1 8h16"/><path d="M14 18l4-4v4z" fill="#111"/></symbol>
<!-- status -->
<symbol id="t1" viewBox="0 0 18 18"><path stroke="#222" stroke-dasharray="1.500 2" d="M3 3h12M3 8h12"/><path stroke="#222" d="M3 15h12M15 2v13"/></symbol>
<symbol id="t2" viewBox="0 0 18 18"><path fill="#666" d="M1 1h16v16H1z"/><path stroke="#eee" d="M1 5h16M1 9h16M1 13h16M5 1v16M9 1v16M13 1v16"/></symbol>
<symbol id="t3" viewBox="0 0 18 18"><path stroke="#444" fill="none" d="M2 1v15h16M2 10h6v6"/></symbol>
<symbol id="t4" viewBox="0 0 18 18"><circle cx="8" cy="10" r="6" fill="none" stroke="#666"/><path class="kk" d="M4 13h12M7 13l7-9M10 8l2 4"/></symbol>
<symbol id="t5" viewBox="0 0 18 18"><path class="g" d="M3.500 3.500h13v13h-13z"/><circle class="o" cx="3" cy="3" r="2.500"/></symbol>
<symbol id="t6" viewBox="0 0 18 18"><path class="kk" d="M2 13h14M4 13l9-8M8 9l3 4"/></symbol>
<symbol id="t7" viewBox="0 0 18 18"><path class="k" d="M2 0v16h16M2 16l9-9"/><path d="M16 0h-4l-2 4h3l-2 4 5-5h-3z" fill="#ef8a17"/></symbol>
<symbol id="t8" viewBox="0 0 18 18"><path class="kk" stroke-width="2" d="M1 8h10M6 3v10"/><path class="w" d="M9 10h7v3H9z"/></symbol>
<symbol id="t9" viewBox="0 0 18 18"><path d="M1 8h16M9 2v13" stroke="#111" stroke-width="2"/></symbol>
<symbol id="t10" viewBox="0 0 18 18"><path class="w" d="M4.500 1.500h9v15h-9z"/><path fill="#111" d="M6 3h6v2H6zM6 7h2v2H6zM10 7h2v2h-2zM6 11h2v2H6zM10 11h2v2h-2z"/></symbol>
<symbol id="t11" viewBox="0 0 18 18"><path class="k" d="M3.500 2.500h11v11h-11z"/><path fill="#444" d="M6 5l6 7H6z"/><path class="kk" d="M1 16h16"/></symbol>
<symbol id="t12" viewBox="0 0 18 18"><path class="w" d="M2 3h6.500v8H2zM9.500 3H16v8H9.500z"/><path class="kk" d="M1 14h16"/></symbol>
<symbol id="t13" viewBox="0 0 18 18"><circle class="gk" cx="9" cy="9" r="7.500"/><circle class="k" cx="9" cy="9" r="3.500"/><path class="k" d="M3 3l4 4M15 3l-4 4M3 15l4-4M15 15l-4-4"/></symbol>
<symbol id="t14" viewBox="0 0 18 18"><path class="k" d="M2 2h3M7 2h3M12 2h3"/><path class="g" d="M2.500 5.500h13v10h-13z"/><path d="M7 7l6 3-6 3z" fill="#222"/></symbol>
<symbol id="t15" viewBox="0 0 18 18"><path class="g" d="M9 1l2 8 6 6-4 1-4-4-4 4-4-1 6-6z"/></symbol>
<symbol id="t16" viewBox="0 0 18 18"><path class="g" d="M7 1l2 8 6 6-4 1-4-4-4 4-4-1 6-6z"/><circle cx="13" cy="9" r="3.500" fill="#f6c026" stroke="#e37a10"/></symbol>
<symbol id="t17" viewBox="0 0 18 18"><path d="M9 1l2 2 3-1 1 3 3 1-1 3 1 1-1 3-3 1-1 3-3-1-2 2-2-2-3 1-1-3-3-1 1-3-1-2 1-3 3-1 1-3 3 1z" fill="#ccc" stroke="#333" transform="scale(.9)"/><circle class="e" cx="8" cy="8" r="3"/></symbol>
<symbol id="t18" viewBox="0 0 18 18"><path class="w" d="M1.500 8.500h10v8h-10z"/><path d="M9 8V4a3.500 3.500 0 0 1 7 0v3" fill="none" stroke="#eee" stroke-width="2"/><path class="kk" d="M6.500 10v4"/></symbol>
<symbol id="t19" viewBox="0 0 18 18"><path fill="#eee" stroke="#555" d="M1.500 3.500h15v13h-15z"/><path fill="#888" d="M2 2h14v3H2z"/></symbol>
<symbol id="sat" viewBox="0 0 18 18"><path class="g" d="M3 3c6 2 9 5 11 11z"/><path class="kk" d="M7 11l-4 6h9M9 8l5-6"/></symbol>
<symbol id="star" viewBox="0 0 18 18"><path fill="#eee" stroke="#333" d="M9 1l2.500 5.500 6 .7-4.500 4 1.300 5.800L9 14l-5.300 3 1.300-5.800-4.500-4 6-.7z"/></symbol>
<symbol id="mark" viewBox="-10 -10 20 20"><circle r="8" class="mk"/><path class="mk" d="M-6-4L0 0l6 5M0 0v8M-5 6l5-6"/></symbol>
</defs>
</svg>

<header class="top">
  <div class="logo">
    <svg class="logo-c" viewBox="0 0 34 44" role="img" aria-label="AutoCAD"><defs><linearGradient id="logored" x1="0" x2="1"><stop offset="0" stop-color="#e2262b"/><stop offset="1" stop-color="#a50f14"/></linearGradient></defs><path d="M3 8l11-3 5 7c-4 0-6 3-6 7 0 5 2 8 6 9 4 0 8-1 11-2l-2 6c-4 2-8 2-12 0l-1 10c-5-4-10-12-11-22 0-6-1-9-1-12z" fill="url(#logored)" stroke="#6d0a0d" stroke-width=".6"/></svg>
    <span class="logo-arrow"></span>
  </div>
  <span class="qat"></span>
  <div class="title-bar">
    <div class="title-text"><span class="title-app">AutoCAD 2009</span> Drawing2.dwg</div>
    <div class="search">
      <span class="search-tri"></span>
      <span class="search-input">Type a keyword or phrase</span>
      <span class="search-btn wide"><svg class="ic"><use href="#zoom"/></svg></span>
      <span class="search-btn arrow"><span class="tri-small"></span></span>
      <span class="search-btn"><svg class="ic"><use href="#sat"/></svg></span>
      <span class="search-btn"><svg class="ic"><use href="#star"/></svg></span>
    </div>
    <div class="win-ctl">
      <span class="wc-min"></span><span class="wc-max"></span><span class="wc-x">X</span>
    </div>
  </div>
  <nav class="menu-bar">
    <ul class="menu">
      <li>File</li><li>Edit</li><li>View</li><li>Insert</li><li>Format</li><li>Tools</li><li>Draw</li><li>Dimension</li><li>Modify</li><li>Novapoint</li><li>Express</li><li>Window</li><li>Help</li><li>NO</li><li class="m-stab">GS-Stability</li><li class="m-plan">GS Plan</li><li class="m-prof">GS Profil</li>
    </ul>
    <div class="win-ctl doc">
      <span class="wc-min"></span><span class="wc-max"></span><span class="wc-x">X</span>
    </div>
  </nav>

  <div class="tb-row">
    <div class="tb">
      <span class="grip"></span>
      <i class="b"><svg class="ic"><use href="#new"/></svg></i><i class="b"><svg class="ic"><use href="#open"/></svg></i><i class="b"><svg class="ic"><use href="#save"/></svg></i><i class="s"></i>
      <i class="b"><svg class="ic"><use href="#plot"/></svg></i><i class="b"><svg class="ic"><use href="#preview"/></svg></i><i class="b"><svg class="ic"><use href="#publish"/></svg></i><i class="b"><svg class="ic"><use href="#d3"/></svg></i><i class="b"><svg class="ic"><use href="#sheet"/></svg></i><i class="s"></i>
      <i class="b"><svg class="ic"><use href="#cut"/></svg></i><i class="b"><svg class="ic"><use href="#copy"/></svg></i><i class="b"><svg class="ic"><use href="#paste"/></svg></i><i class="b"><svg class="ic"><use href="#match"/></svg></i><i class="b"><svg class="ic"><use href="#blockb"/></svg></i><i class="s"></i>
      <i class="b"><svg class="ic"><use href="#undo"/></svg></i><i class="dd"></i><i class="b"><svg class="ic"><use href="#redo"/></svg></i><i class="dd short"></i><i class="s"></i>
      <i class="b"><svg class="ic"><use href="#pan"/></svg></i><i class="b"><svg class="ic"><use href="#zoom"/></svg></i><i class="b"><svg class="ic"><use href="#zoomw"/></svg></i><i class="b"><svg class="ic"><use href="#zoomp"/></svg></i><i class="s"></i>
      <i class="b"><svg class="ic"><use href="#props"/></svg></i><i class="b"><svg class="ic"><use href="#dc"/></svg></i><i class="b"><svg class="ic"><use href="#tp"/></svg></i><i class="b"><svg class="ic"><use href="#ssm"/></svg></i><i class="b"><svg class="ic"><use href="#mk"/></svg></i><i class="b"><svg class="ic"><use href="#calc"/></svg></i><i class="s"></i>
      <i class="b"><svg class="ic"><use href="#help"/></svg></i>
    </div>
    <div class="tb">
      <span class="grip"></span>
      <i class="b"><svg class="ic"><use href="#w1"/></svg></i><i class="b"><svg class="ic"><use href="#cv"/></svg></i><i class="b"><svg class="ic"><use href="#qm"/></svg></i><i class="b"><svg class="ic"><use href="#bars"/></svg></i><i class="b"><svg class="ic"><use href="#lnk"/></svg></i><i class="b"><svg class="ic"><use href="#xy"/></svg></i><i class="b"><svg class="ic"><use href="#xx"/></svg></i><i class="b"><svg class="ic"><use href="#map"/></svg></i><i class="b"><svg class="ic"><use href="#look"/></svg></i><i class="b"><svg class="ic"><use href="#rgb"/></svg></i><i class="b"><svg class="ic"><use href="#ini"/></svg></i><i class="b"><svg class="ic"><use href="#brush"/></svg></i><i class="b"><svg class="ic"><use href="#pin"/></svg></i><i class="b"><svg class="ic"><use href="#face"/></svg></i>
    </div>
    <div class="tb">
      <span class="grip"></span>
      <i class="b"><svg class="ic"><use href="#vp1"/></svg></i><i class="b"><svg class="ic"><use href="#vp2"/></svg></i><i class="b"><svg class="ic"><use href="#vp3"/></svg></i><i class="b"><svg class="ic"><use href="#vp4"/></svg></i><i class="b"><svg class="ic"><use href="#vp5"/></svg></i><i class="s"></i>
      <span class="combo w-100"><span class="combo-val"></span><span class="combo-arrow"></span></span>
    </div>
  </div>

  <div class="tb-row">
    <div class="tb">
      <span class="grip"></span>
      <i class="b"><svg class="ic"><use href="#layer"/></svg></i>
      <span class="combo w-300">
        <span class="combo-val layer-val">
          <svg class="ic sm"><use href="#bulb"/></svg><svg class="ic sm"><use href="#sun"/></svg><svg class="ic sm"><use href="#gear"/></svg><svg class="ic sm"><use href="#unlock"/></svg><span class="swatch"></span><span class="zero">0</span>
        </span>
        <span class="combo-arrow"></span>
      </span>
      <i class="b"><svg class="ic"><use href="#lfreeze"/></svg></i><i class="b"><svg class="ic"><use href="#lprev"/></svg></i><i class="b"><svg class="ic"><use href="#lstate"/></svg></i>
    </div>
    <div class="tb">
      <span class="grip"></span>
      <i class="b"><svg class="ic"><use href="#lmake"/></svg></i><i class="b"><svg class="ic"><use href="#lmatch"/></svg></i><i class="b"><svg class="ic"><use href="#lchg"/></svg></i><i class="b"><svg class="ic"><use href="#lqm"/></svg></i><i class="s"></i>
      <i class="b"><svg class="ic"><use href="#lyel"/></svg></i><i class="b"><svg class="ic"><use href="#lred"/></svg></i><i class="b"><svg class="ic"><use href="#lprev"/></svg></i><i class="s"></i>
      <i class="b"><svg class="ic"><use href="#blub"/></svg></i><i class="b"><svg class="ic"><use href="#snow"/></svg></i><i class="b"><svg class="ic"><use href="#lock"/></svg></i><i class="b"><svg class="ic"><use href="#lockx"/></svg></i><i class="s"></i>
      <i class="b"><svg class="ic"><use href="#circy"/></svg></i><i class="b"><svg class="ic"><use href="#bulb2"/></svg></i>
    </div>
    <div class="tb">
      <span class="grip"></span>
      <i class="b"><svg class="ic"><use href="#atext"/></svg></i>
      <span class="combo w-120"><span class="combo-val center">NO_Normal</span><span class="combo-arrow"></span></span><i class="s"></i>
      <i class="b"><svg class="ic"><use href="#dimb"/></svg></i>
      <span class="combo w-120"><span class="combo-val anno"><span class="anno-mark">&#9651;</span>NO_Normal_mm</span><span class="combo-arrow"></span></span><i class="s"></i>
      <i class="b"><svg class="ic"><use href="#tblb"/></svg></i>
      <span class="combo w-120"><span class="combo-val plain">Standard</span><span class="combo-arrow"></span></span><i class="s"></i>
      <i class="b"><svg class="ic"><use href="#mlb"/></svg></i>
      <span class="combo w-120"><span class="combo-val center wide-pad">Standard</span><span class="combo-arrow"></span></span>
    </div>
    <div class="tb">
      <span class="grip"></span>
      <i class="b"><svg class="ic"><use href="#scroll"/></svg></i><i class="s"></i>
      <i class="b"><svg class="ic"><use href="#sparkg"/></svg></i><i class="s"></i>
      <i class="b"><svg class="ic"><use href="#sparkr"/></svg></i><i class="s"></i>
      <i class="b"><svg class="ic"><use href="#gvy"/></svg></i><i class="s"></i>
      <i class="b"><svg class="ic"><use href="#arrd"/></svg></i><i class="s"></i>
      <i class="b"><svg class="ic"><use href="#hood"/></svg></i><i class="s"></i>
      <i class="b"><svg class="ic"><use href="#dome"/></svg></i><i class="s"></i>
      <i class="b"><svg class="ic"><use href="#page"/></svg></i><i class="s"></i>
      <i class="b"><svg class="ic"><use href="#book"/></svg></i><i class="b"><svg class="ic"><use href="#door"/></svg></i>
    </div>
  </div>
</header>

<main class="work">
  <aside class="dock-left">
    <div class="dock-col">
      <div class="vt">
        <span class="vgrip"></span>
        <i class="vb"><svg class="ic"><use href="#dlin"/></svg></i><i class="vb"><svg class="ic"><use href="#dtri"/></svg></i><i class="vb"><svg class="ic"><use href="#dtri2"/></svg></i><i class="vs"></i><i class="vb"><svg class="ic"><use href="#scrollg"/></svg></i><i class="vb"><svg class="ic"><use href="#axz"/></svg></i>
      </div>
      <div class="vt">
        <span class="vgrip"></span>
        <i class="vb"><svg class="ic"><use href="#line"/></svg></i><i class="vb"><svg class="ic"><use href="#xline"/></svg></i><i class="vb"><svg class="ic"><use href="#pline"/></svg></i><i class="vb"><svg class="ic"><use href="#poly"/></svg></i><i class="vb"><svg class="ic"><use href="#rect"/></svg></i><i class="vb"><svg class="ic"><use href="#arc"/></svg></i><i class="vb"><svg class="ic"><use href="#circ"/></svg></i><i class="vb"><svg class="ic"><use href="#cloud"/></svg></i><i class="vb"><svg class="ic"><use href="#spline"/></svg></i><i class="vb"><svg class="ic"><use href="#ell"/></svg></i><i class="vb"><svg class="ic"><use href="#earc"/></svg></i><i class="vb"><svg class="ic"><use href="#ins"/></svg></i><i class="vb"><svg class="ic"><use href="#blk"/></svg></i><i class="vb"><svg class="ic"><use href="#pt"/></svg></i><i class="vb"><svg class="ic"><use href="#hatch"/></svg></i><i class="vb"><svg class="ic"><use href="#grad"/></svg></i><i class="vb"><svg class="ic"><use href="#region"/></svg></i><i class="vb"><svg class="ic"><use href="#table"/></svg></i><i class="vb"><svg class="ic"><use href="#bigA"/></svg></i>
      </div>
      <div class="vt">
        <span class="vgrip"></span>
        <i class="vb"><svg class="ic"><use href="#s1"/></svg></i><i class="vb"><svg class="ic"><use href="#s2"/></svg></i><i class="vs"></i><i class="vb"><svg class="ic"><use href="#s3"/></svg></i><i class="vb"><svg class="ic"><use href="#s4"/></svg></i><i class="vb"><svg class="ic"><use href="#s5"/></svg></i><i class="vb"><svg class="ic"><use href="#s6"/></svg></i><i class="vb"><svg class="ic"><use href="#s7"/></svg></i><i class="vs"></i><i class="vb"><svg class="ic"><use href="#s8"/></svg></i><i class="vb"><svg class="ic"><use href="#s9"/></svg></i><i class="vb"><svg class="ic"><use href="#s10"/></svg></i><i class="vs"></i><i class="vb"><svg class="ic"><use href="#s11"/></svg></i><i class="vb"><svg class="ic"><use href="#s12"/></svg></i><i class="vb"><svg class="ic"><use href="#s13"/></svg></i><i class="vb"><svg class="ic"><use href="#s14"/></svg></i>
      </div>
    </div>
    <div class="dock-col">
      <div class="vt">
        <span class="vgrip"></span>
        <i class="vb"><svg class="ic"><use href="#erase"/></svg></i><i class="vb"><svg class="ic"><use href="#mcopy"/></svg></i><i class="vb"><svg class="ic"><use href="#mirror"/></svg></i><i class="vb"><svg class="ic"><use href="#offset"/></svg></i><i class="vb"><svg class="ic"><use href="#array"/></svg></i><i class="vb"><svg class="ic"><use href="#move"/></svg></i><i class="vb"><svg class="ic"><use href="#rotate"/></svg></i><i class="vb"><svg class="ic"><use href="#scale"/></svg></i><i class="vb"><svg class="ic"><use href="#stretch"/></svg></i><i class="vb"><svg class="ic"><use href="#trim"/></svg></i><i class="vb"><svg class="ic"><use href="#extend"/></svg></i><i class="vb"><svg class="ic"><use href="#brk1"/></svg></i><i class="vb"><svg class="ic"><use href="#brk2"/></svg></i><i class="vb"><svg class="ic"><use href="#join"/></svg></i><i class="vb"><svg class="ic"><use href="#chamfer"/></svg></i><i class="vb"><svg class="ic"><use href="#fillet"/></svg></i><i class="vb"><svg class="ic"><use href="#exp"/></svg></i>
      </div>
    </div>
  </aside>

  <section class="model">
    <svg class="drawing" viewBox="58 109 1589 868" role="img" aria-label="Model space drawing">
      <path class="cy" d="M1173.500 109v61M58 646l23 15"/>

      <g transform="translate(859 159)"><use href="#mark" x="-10" y="-10" width="20" height="20"/><path class="gy" d="M.5 8v22"/><path class="cy" d="M.5 30v66"/><g transform="rotate(35)"><path class="cy" d="M8 0h26"/><text class="yl" x="16" y="-1">1276</text><text class="yl" x="12" y="9">1059</text><text class="yl" x="40" y="7">176</text></g></g>

      <g transform="translate(1327 187)"><use href="#mark" x="-10" y="-10" width="20" height="20"/><path class="cy" d="M.5 8v149"/><g transform="rotate(35)"><path class="cy" d="M8 0h26"/><text class="wl" x="-10" y="4" text-anchor="end">371</text><text class="yl" x="16" y="-1">1322</text><text class="yl" x="12" y="9">1028</text><text class="yl" x="40" y="7">294</text></g></g>

      <g transform="translate(677.500 248)"><use href="#mark" x="-10" y="-10" width="20" height="20"/><path class="ye" d="M.5 8v26"/><path class="dg" d="M.5 34v6"/><path class="cy" d="M.5 40v97"/><path class="rd" d="M.5 137v11"/><g transform="rotate(35)"><path class="cy" d="M8 0h28"/><text class="wl" x="-10" y="4" text-anchor="end">166</text><text class="yl" x="16" y="-1">1219</text><text class="yl" x="12" y="9">991</text><text class="yl" x="42" y="7">251 +20</text></g></g>

      <g transform="translate(479 345)"><use href="#mark" x="-10" y="-10" width="20" height="20"/><path class="ye" d="M.5 8v14"/><path class="dg" d="M.5 22v30"/><path class="cy" d="M.5 52v22"/><g transform="rotate(35)"><path class="cy" d="M8 0h30"/><text class="wl" x="-10" y="4" text-anchor="end">167_08T</text><text class="yl bd" x="16" y="-1">1229</text><text class="yl" x="10" y="9">1085</text><text class="yl bd" x="38" y="7">186</text></g></g>
      <path class="tri" d="M488 326l13 8-13 5z"/>

      <g transform="translate(992 304)"><use href="#mark" x="-10" y="-10" width="20" height="20"/><path class="cy" d="M.5 8v43"/><g transform="rotate(35)"><path class="cy" d="M8 0h26"/><text class="wl" x="-10" y="4" text-anchor="end">137</text><text class="yl" x="16" y="-1">1217</text><text class="yl" x="12" y="9">1119</text><text class="yl" x="40" y="7">98</text></g></g>

      <g transform="translate(818 425)"><use href="#mark" x="-10" y="-10" width="20" height="20"/><path class="wh" d="M.5 8v120"/><g transform="rotate(35)"><path class="cy" d="M8 0h26"/><text class="wl" x="-10" y="4" text-anchor="end">165</text><text class="yl" x="16" y="-1">1252</text><text class="yl" x="12" y="9">2</text><text class="yl" x="40" y="7">237</text></g></g>

      <g transform="translate(1138 418)"><use href="#mark" x="-10" y="-10" width="20" height="20"/><path class="cy" d="M.5 8v45"/><g transform="rotate(35)"><path class="cy" d="M8 0h26"/><text class="wl" x="-10" y="4" text-anchor="end">136</text><text class="yl bd" x="16" y="-1">1240</text><text class="yl" x="12" y="9">1142</text><text class="yl" x="40" y="7">98</text></g></g>

      <g transform="translate(660 545)"><use href="#mark" x="-10" y="-10" width="20" height="20"/><path class="wh" d="M.5 8v105"/><g transform="rotate(35)"><path class="cy" d="M8 0h26"/><text class="wl" x="-10" y="4" text-anchor="end">38</text><text class="yl" x="16" y="-1">1244</text><text class="yl" x="12" y="9">1035</text><text class="yl" x="40" y="7">209</text></g></g>

      <g transform="translate(233 597)"><use href="#mark" x="-10" y="-10" width="20" height="20"/><path class="gy" d="M.5 8v25"/><path class="wh" d="M.5 33v35"/><g transform="rotate(35)"><path class="cy" d="M8 0h26"/><text class="wl" x="-10" y="4" text-anchor="end">38A</text><text class="yl" x="16" y="-1">1215</text><text class="yl" x="12" y="9">1017</text><text class="yl" x="40" y="7">129</text></g></g>

      <g transform="translate(789 632)"><use href="#mark" x="-10" y="-10" width="20" height="20"/><path class="ye" d="M.5 8v50"/><path class="cy" d="M.5 58v17"/><g transform="rotate(35)"><path class="cy" d="M8 0h30"/><text class="wl" x="-10" y="4" text-anchor="end">138</text><text class="yl" x="16" y="-1">1252</text><text class="yl" x="12" y="9">1113</text><text class="yl" x="40" y="7">138</text></g></g>

      <g transform="translate(845 652)"><use href="#mark" x="-10" y="-10" width="20" height="20"/><path class="ye" d="M.5 8v35"/><g transform="rotate(35)"><path class="cy" d="M8 0h30"/><text class="wl" x="-10" y="4" text-anchor="end">138B</text><text class="yl" x="16" y="-1">1256</text><text class="yl" x="12" y="9">1177</text><text class="yl" x="40" y="7">79</text></g></g>

      <g transform="translate(174 766)"><use href="#mark" x="-10" y="-10" width="20" height="20"/><path class="ye" d="M.5 8v36"/><path class="dg" d="M.5 44v16"/><path class="gy" d="M.5 60v8"/><path class="cy" d="M.5 68v86"/><path class="rd" d="M.5 154v2"/><g transform="rotate(35)"><path class="cy" d="M8 0h34"/><text class="wl" x="-10" y="4" text-anchor="end">168_08T</text><text class="yl bd" x="16" y="-1">1235</text><text class="yl" x="10" y="9">964</text><text class="yl bd" x="42" y="7">2000 +29</text></g></g>

      <g transform="translate(1080 835)"><use href="#mark" x="-10" y="-10" width="20" height="20"/><path class="cy" d="M.5 8v62"/><g transform="rotate(35)"><path class="cy" d="M8 0h26"/><text class="wl" x="-10" y="4" text-anchor="end">177</text><text class="yl" x="16" y="-1">1215</text><text class="yl" x="12" y="9">1086</text><text class="yl" x="40" y="7">129</text></g></g>

      <g transform="translate(131 951)"><use href="#mark" x="-10" y="-10" width="20" height="20"/><path class="ye" d="M.5 8v25"/><path class="cy" d="M8 6l22 16"/></g>
      <path class="tri" d="M140 947l5-11 6 6z"/>

      <path class="rd" d="M174 905v17"/>
      <text class="ucs-z" x="134" y="851">Z</text>
      <text class="ucs-y" x="177" y="860">Y</text>
      <text class="ucs-x" x="177" y="919">X</text>
      <defs>
        <linearGradient id="bluegr" x1="0" x2="1"><stop offset="0" stop-color="#3e8fd6"/><stop offset=".5" stop-color="#2670b8"/><stop offset="1" stop-color="#0f4e8f"/></linearGradient>
        <linearGradient id="greengr" x1="0" x2="1" y1="1" y2="0"><stop offset="0" stop-color="#20b020"/><stop offset="1" stop-color="#0a8a0a"/></linearGradient>
        <linearGradient id="redgr" x1="0" x2="1" y1="0" y2="1"><stop offset="0" stop-color="#d8302a"/><stop offset="1" stop-color="#a01010"/></linearGradient>
      </defs>
      <g class="ucs">
        <path fill="#0c5a9f" d="M126 882h7v25h-7z"/>
        <path fill="url(#bluegr)" d="M129 860l8 19c0 4-16 4-16 0z"/>
        <path fill="url(#greengr)" d="M130 904l27-20 4 5-29 20z"/>
        <path fill="#0d9a0d" d="M176 870l-23 8c1 6 7 12 12 13z"/>
        <path fill="url(#redgr)" d="M130 905l28 18-3 5-26-19z"/>
        <path fill="#c41a1a" d="M176 942l-12-21c-4 1-9 7-10 13z"/>
      </g>
    </svg>
    <div class="tabs">
      <span class="nav"><i class="nv first"></i><i class="nv prev"></i><i class="nv next"></i><i class="nv last"></i></span>
      <span class="tab active">Model</span>
      <span class="tab">Layout1</span>
      <span class="tab">Layout2</span>
    </div>
  </section>

  <aside class="dock-right">
    <div class="vt r">
      <span class="vgrip"></span>
      <i class="vb"><svg class="ic"><use href="#r1"/></svg></i><i class="vb"><svg class="ic"><use href="#r2"/></svg></i><i class="vb"><svg class="ic"><use href="#r3"/></svg></i><i class="vb"><svg class="ic"><use href="#r4"/></svg></i><i class="vs"></i>
      <i class="vb"><svg class="ic"><use href="#r5"/></svg></i><i class="vb"><svg class="ic"><use href="#r6"/></svg></i><i class="vb"><svg class="ic"><use href="#r7"/></svg></i><i class="vb"><svg class="ic"><use href="#r8"/></svg></i><i class="vs"></i>
      <i class="vb"><svg class="ic"><use href="#r9"/></svg></i><i class="vb"><svg class="ic"><use href="#r10"/></svg></i><i class="vb"><svg class="ic"><use href="#r11"/></svg></i><i class="vb"><svg class="ic"><use href="#r12"/></svg></i><i class="vb"><svg class="ic"><use href="#r13"/></svg></i><i class="vs"></i>
      <i class="vb"><svg class="ic"><use href="#r14"/></svg></i><i class="vb"><svg class="ic"><use href="#r15"/></svg></i><i class="vb"><svg class="ic"><use href="#r16"/></svg></i><i class="vb"><svg class="ic"><use href="#r17"/></svg></i><i class="vs"></i>
      <i class="vb"><svg class="ic"><use href="#r18"/></svg></i><i class="vb"><svg class="ic"><use href="#r19"/></svg></i><i class="vb"><svg class="ic"><use href="#r20"/></svg></i><i class="vs"></i>
      <i class="vb"><svg class="ic"><use href="#r21"/></svg></i>
    </div>
    <div class="vt r">
      <span class="vgrip"></span>
      <i class="vb"><svg class="ic"><use href="#c1"/></svg></i><i class="vb"><svg class="ic"><use href="#c2"/></svg></i><i class="vb"><svg class="ic"><use href="#c3"/></svg></i><i class="vb"><svg class="ic"><use href="#c4"/></svg></i><i class="vs"></i>
      <i class="vb"><svg class="ic"><use href="#c5"/></svg></i><i class="vb"><svg class="ic"><use href="#c6"/></svg></i><i class="vs"></i>
      <i class="vb"><svg class="ic"><use href="#c7"/></svg></i><i class="vb"><svg class="ic"><use href="#c8"/></svg></i><i class="vs"></i>
      <i class="vb"><svg class="ic"><use href="#c9"/></svg></i><i class="vb"><svg class="ic"><use href="#c10"/></svg></i><i class="vb"><svg class="ic"><use href="#c11"/></svg></i><i class="vb"><svg class="ic"><use href="#w1"/></svg></i><i class="vs"></i>
      <i class="vb"><svg class="ic"><use href="#c13"/></svg></i><i class="vb"><svg class="ic"><use href="#c14"/></svg></i><i class="vb"><svg class="ic"><use href="#c15"/></svg></i><i class="vb"><svg class="ic"><use href="#c16"/></svg></i>
    </div>
  </aside>
</main>

<footer class="status">
  <span class="st-proj">Prosjektnavn: 5007800 Dobbeltspor OsloS-Ski</span>
  <span class="st-coord">603893.9050, 6622806.7958, 0.0000</span>
  <div class="st-group">
    <i class="sb"><svg class="ic sm"><use href="#t1"/></svg></i><i class="sb"><svg class="ic sm"><use href="#t2"/></svg></i><i class="sb"><svg class="ic sm"><use href="#t3"/></svg></i><i class="sb"><svg class="ic sm"><use href="#t4"/></svg></i><i class="sb on"><svg class="ic sm"><use href="#t5"/></svg></i><i class="sb on"><svg class="ic sm"><use href="#t6"/></svg></i><i class="sb on"><svg class="ic sm"><use href="#t7"/></svg></i><i class="sb"><svg class="ic sm"><use href="#t8"/></svg></i><i class="sb"><svg class="ic sm"><use href="#t9"/></svg></i><i class="sb"><svg class="ic sm"><use href="#t10"/></svg></i>
  </div>
  <div class="st-right">
    <i class="sb model-btn">MODEL</i><i class="sb"><svg class="ic sm"><use href="#t11"/></svg></i><i class="sb"><svg class="ic sm"><use href="#t12"/></svg></i>
    <span class="gap-12"></span>
    <i class="sb"><svg class="ic sm"><use href="#pan"/></svg></i><i class="sb"><svg class="ic sm"><use href="#zoom"/></svg></i><i class="sb"><svg class="ic sm"><use href="#t13"/></svg></i><i class="sb"><svg class="ic sm"><use href="#t14"/></svg></i>
    <span class="gap-12"></span>
    <i class="sb scale-btn"><svg class="ic sm"><use href="#t15"/></svg><span>1:1</span><span class="tri-dark"></span></i><i class="sb"><svg class="ic sm"><use href="#t16"/></svg></i>
    <span class="gap-8"></span>
    <i class="sb"><svg class="ic sm"><use href="#t17"/></svg></i><i class="sb"><svg class="ic sm"><use href="#t18"/></svg></i>
    <span class="gap-4"></span>
    <i class="sb narrow"><span class="tri-dark"></span></i><i class="sb last-win"><svg class="ic sm"><use href="#t19"/></svg></i>
  </div>
</footer>
</body>
</html>
```
FILE: styles.css
```css
* { box-sizing: border-box; }
html, body { margin: 0; padding: 0; }
body {
  width: 1677px;
  height: 1018px;
  overflow: hidden;
  background: #666;
  font-family: "Liberation Sans", Arial, sans-serif;
  display: flex;
  flex-direction: column;
  position: relative;
}
i { font-style: normal; display: block; }
.sprite { position: absolute; width: 0; height: 0; }

/* sprite paint classes */
.k { fill: none; stroke: #222; }
.kk { fill: none; stroke: #222; stroke-width: 1.5; }
.w { fill: #fff; stroke: #333; }
.g { fill: #e4e4e4; stroke: #333; }
.e { fill: #f4f4f4; stroke: #333; }
.gl { fill: #e6eef4; stroke: #444; stroke-width: 1.5; }
.gb { fill: #9cd0ec; stroke: #222; }
.gk { fill: #e8e8e8; stroke: #444; stroke-width: 1.3; }
.g0 { fill: #f4f4f4; stroke: #222; }
.bl { fill: none; stroke: #0a6fc2; }
.bf { fill: #9ec6ea; stroke: #0a6fc2; }
.o { fill: #fff; stroke: #e8641e; stroke-width: 1.5; }
.it { font-family: "Liberation Sans", Arial, sans-serif; fill: #111; }
.wt { fill: #fff; font-weight: 700; }

.ic { width: 18px; height: 18px; display: block; }
.ic.sm { width: 16px; height: 16px; }

/* header */
.top {
  position: relative;
  flex: 0 0 108px;
  background: linear-gradient(#7c7c7c 26px, #5a5a5a 108px);
}
.logo {
  position: absolute;
  z-index: 2;
  left: 0; top: 4px;
  width: 35px; height: 46px;
  background: #5d5d5d;
  border: 1px solid #888;
  border-radius: 0 0 3px 0;
}
.logo-c { position: absolute; left: 0; top: 0; width: 34px; height: 44px; }
.logo-arrow {
  position: absolute;
  right: 5px; bottom: 4px;
  border: 4px solid transparent;
  border-top: 5px solid #000;
  border-bottom: 0;
}
.qat {
  position: absolute;
  z-index: 2;
  left: 35px; top: 5px;
  width: 18px; height: 21px;
  background: linear-gradient(#b0b0b0, #6f6f6f);
  border: 1px solid #4a4a4a;
}
.title-bar {
  height: 26px;
  background: linear-gradient(#7e7e7e, #3a3a3a 55%, #3a3a3a);
  border-top: 1px solid #555;
  display: flex;
  align-items: center;
  position: relative;
}
.title-text {
  margin-left: 748px;
  width: 470px;
  font-size: 11px;
  font-weight: 700;
  color: #fff;
  font-family: "DejaVu Sans", sans-serif;
  white-space: nowrap;
}
.title-app { color: #a9a9a9; }
.search { display: flex; align-items: center; height: 19px; width: 376px; margin-left: 68px; }
.search-tri {
  border: 4px solid transparent;
  border-left: 5px solid #eee;
  border-right: 0;
  margin-right: 4px;
}
.search-input {
  width: 218px; height: 19px;
  background: #fff;
  border: 1px solid #000;
  color: #9a9a9a;
  font-size: 11px;
  line-height: 17px;
  padding-left: 2px;
}
.search-btn {
  width: 23px; height: 19px;
  display: flex; align-items: center; justify-content: center;
  background: linear-gradient(#c7c7c7, #9f9f9f);
  border: 1px solid #222;
  border-left: 0;
}
.search-btn.wide { width: 26px; }
.search-btn.arrow { width: 8px; }
.search-btn .ic { width: 15px; height: 15px; }
.tri-small { border: 3px solid transparent; border-top: 4px solid #555; border-bottom: 0; }
.win-ctl { display: flex; align-items: center; gap: 14px; position: absolute; right: 4px; }
.win-ctl.doc { right: 1px; top: 5px; }
.wc-min { width: 11px; height: 4px; margin-top: 8px; background: #f2f2f2; border: 1px solid #444; }
.wc-max { width: 11px; height: 11px; border: 2px solid #f2f2f2; box-shadow: 2px -2px 0 -1px #f2f2f2; margin: 0 2px; }
.wc-x { color: #f2f2f2; font: 700 13px "Liberation Sans", sans-serif; width: 12px; }

.menu-bar { height: 26px; position: relative; }
.menu {
  list-style: none; margin: 0;
  padding: 6px 0 0 47px;
  display: flex;
  gap: 19.2px;
  color: #ececec;
  font-size: 11px;
  line-height: 14px;
}
.m-stab { margin-left: -4px; }
.m-plan { margin-left: -4px; }
.m-prof { margin-left: -9px; }

.tb-row { display: flex; gap: 2px; height: 24px; padding-left: 2px; margin-bottom: 3px; }
.tb {
  display: flex;
  align-items: center;
  height: 24px;
  background: #ededed;
  border: 1px solid #2a2a2a;
  border-left: 0;
}
.grip {
  align-self: stretch;
  width: 7px;
  background: #5a5a5a radial-gradient(#0b0b0b 40%, transparent 45%) 1px 1px / 2px 2px;
  background-clip: content-box;
  border-left: 1px solid #2a2a2a;
  padding: 3px 1px;
}
.b { width: 23px; height: 22px; display: flex; align-items: center; justify-content: center; flex: none; }
.s { width: 6px; height: 20px; flex: none; position: relative; }
.s::after { content: ""; position: absolute; left: 2px; top: 1px; bottom: 1px; width: 1px; background: #c9c4ae; }
.dd { width: 14px; height: 22px; position: relative; flex: none; }
.dd.short { width: 11px; }
.dd::after {
  content: ""; position: absolute; left: 3px; top: 9px;
  border: 3.5px solid transparent; border-top: 4px solid #b9b9b9; border-bottom: 0;
}
.combo {
  display: flex; flex: none; height: 21px;
  background: #ece9d8;
  font-size: 11px;
  color: #aaa79b;
  line-height: 20px;
  position: relative;
}
.combo-val { flex: 1; min-width: 0; padding-left: 2px; display: flex; align-items: center; white-space: nowrap; }
.combo-val.center { justify-content: center; padding-right: 6px; }
.combo-val.center.wide-pad { padding-right: 22px; }
.combo-val.plain { padding-left: 6px; }
.combo-val.anno { padding-left: 5px; }
.combo-arrow {
  width: 19px;
  border: 1px solid #fbfbf6;
  background: #e6e3d2;
  position: relative;
  flex: none;
}
.combo-arrow::after {
  content: ""; position: absolute; left: 4px; top: 5px;
  width: 7px; height: 7px;
  border-right: 2px solid #bdbbae; border-bottom: 2px solid #bdbbae;
  transform: rotate(45deg) scale(.8);
}
.w-100 { width: 99px; }
.w-120 { width: 120px; }
.w-300 { width: 298px; margin: 0 0 0 1px; }
.layer-val { gap: 0; padding-left: 4px; }
.layer-val .ic { margin-right: 0; }
.swatch { width: 10px; height: 10px; background: #fff; border: 1px solid #111; margin: 0 6px 0 3px; }
.zero { color: #aaa79b; font-size: 12px; }
.anno-mark { color: #2f6fb5; margin-right: 3px; font-size: 12px; }

/* work area */
.work { flex: 1 1 auto; display: flex; height: 886px; min-height: 0; }
.dock-left { flex: 0 0 58px; display: flex; gap: 5px; padding-left: 1px; background: #666; }
.dock-col { width: 23px; display: flex; flex-direction: column; gap: 3px; }
.vt { background: #ededed; border-right: 1px solid #2a2a2a; border-bottom: 1px solid #2a2a2a; width: 24px; }
.vgrip {
  display: block; height: 7px;
  background: #5a5a5a;
  position: relative;
}
.vgrip::after {
  content: ""; position: absolute; left: 6px; right: 6px; top: 2px; bottom: 2px;
  background: radial-gradient(#0b0b0b 40%, transparent 45%) 0 0 / 2px 2px;
}
.vb { height: 22px; display: flex; align-items: center; justify-content: center; }
.vs { height: 5px; position: relative; }
.vs::after { content: ""; position: absolute; left: 2px; right: 2px; top: 2px; height: 1px; background: #c9c4ae; }

.model {
  flex: 0 0 1589px;
  display: flex;
  flex-direction: column;
  border-top: 1px solid #cfcbb8;
  background: #000;
}
.drawing { display: block; width: 1589px; height: 868px; flex: none; background: #000; shape-rendering: crispEdges; }
.cy { stroke: #00e5e5; fill: none; }
.ye { stroke: #ffff00; fill: none; }
.dg { stroke: #0a6b2a; fill: none; }
.rd { stroke: #f00000; fill: none; }
.gy { stroke: #a8a8a8; fill: none; }
.wh { stroke: #d8d8d8; fill: none; }
.tri { fill: none; stroke: #fff; shape-rendering: auto; }
.ucs { shape-rendering: auto; }
.mk { fill: none; stroke: #fff; stroke-width: 1; shape-rendering: auto; }
.wl { fill: #fff; font: 12px "Liberation Sans", sans-serif; }
.yl { fill: #ffff00; font: 9.5px "Liberation Sans", sans-serif; }
.yl.bd { font-weight: 700; }
.ucs-z, .ucs-y, .ucs-x { font: 17px "Liberation Sans", sans-serif; }
.ucs-z { fill: #0a90ff; }
.ucs-y { fill: #00e000; }
.ucs-x { fill: #e01010; }

.tabs {
  flex: 1;
  background: #ece9d8;
  display: flex;
  align-items: stretch;
  color: #111;
  font-size: 11px;
  line-height: 16px;
  border-bottom: 1px solid #fff;
}
.nav { display: flex; width: 60px; margin-right: 4px; }
.nv { width: 15px; background: #e6e3d2; border: 1px solid #fbfbf6; position: relative; }
.nv::after {
  content: ""; position: absolute; top: 3px;
  border: 4px solid transparent;
}
.nv.first::after, .nv.prev::after { left: 2px; border-right: 5px solid #bdbbae; border-left: 0; }
.nv.next::after, .nv.last::after { left: 5px; border-left: 5px solid #bdbbae; border-right: 0; }
.tab { width: 54px; text-align: center; position: relative; margin-right: 1px; }
.tab.active { width: 50px; color: #fff; background: #000; clip-path: polygon(0 0, 100% 0, 88% 100%, 9% 100%); }
.tab:not(.active)::after {
  content: ""; position: absolute; top: 0; right: 0; bottom: 0; width: 100%;
  border-right: 1px solid #888; border-bottom: 1px solid #888; border-left: 1px solid #888;
  transform: skewX(-20deg) scaleX(.96);
}
.dock-right { flex: 0 0 30px; padding-left: 6px; display: flex; flex-direction: column; gap: 3px; background: #666; }
.vt.r { width: 23px; }
.vt.r .vs { height: 6px; }

/* status */
.status {
  flex: 0 0 24px;
  height: 24px;
  border-top: 2px solid #000;
  border-bottom: 2px solid #3a78d0;
  background: linear-gradient(#8c8c8c, #666);
  display: flex;
  align-items: stretch;
  font-size: 11px;
  line-height: 20px;
  color: #111;
  white-space: nowrap;
}
.st-proj { width: 238px; padding-left: 7px; flex: none; letter-spacing: -.15px; }
.st-coord { width: 229px; flex: none; letter-spacing: -.1px; }
.st-group { display: flex; }
.sb {
  width: 22px;
  display: flex; align-items: center; justify-content: center;
  flex: none;
  background: linear-gradient(#b8b8b8, #9a9a9a);
  border-left: 1px solid #333;
}
.sb.on { background: linear-gradient(#e1f0f5 30%, #9cc9d9); }
.st-right { display: flex; margin-left: auto; padding-right: 4px; }
.model-btn { width: 44px; font-size: 12px; color: #111; }
.gap-12 { width: 12px; background: #6d6d6d; }
.gap-8 { width: 8px; background: #6d6d6d; }
.gap-4 { width: 4px; }
.scale-btn { width: 51px; gap: 3px; font-size: 12px; }
.tri-dark { border: 4px solid transparent; border-top: 5px solid #111; border-bottom: 0; }
.narrow { width: 12px; }
.last-win { width: 17px; }
```
